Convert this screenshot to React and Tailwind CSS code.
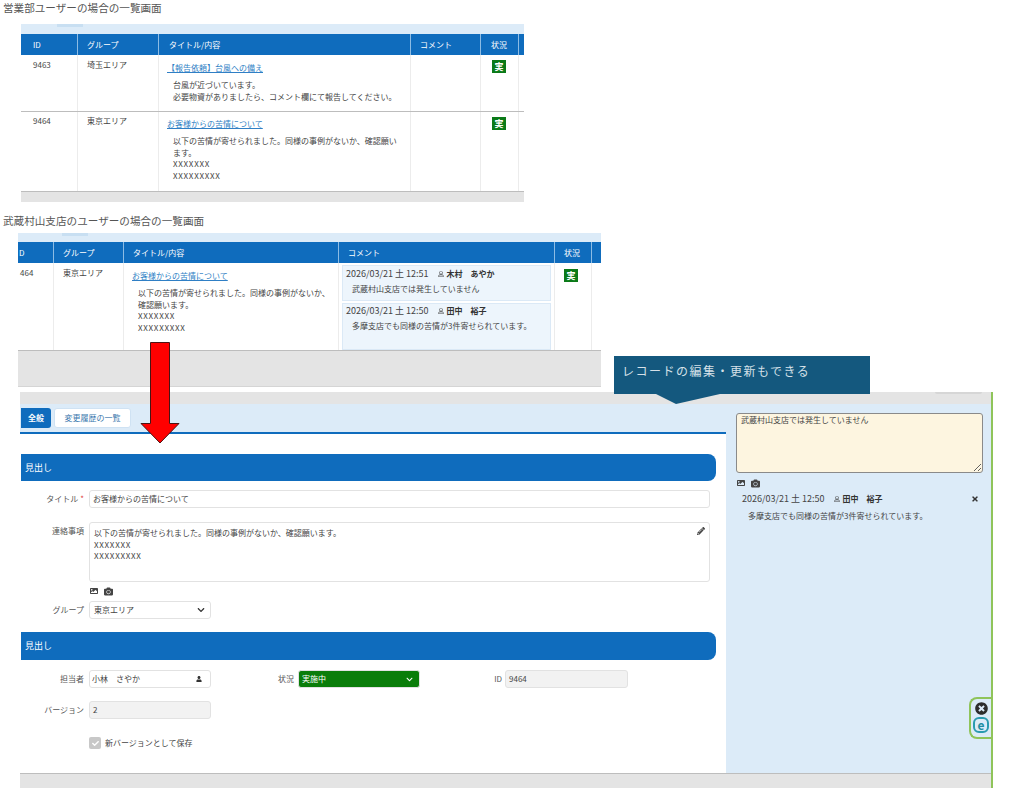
import { FaCamera, FaCheck, FaChevronDown, FaImage, FaPencilAlt, FaRegUser, FaTimes, FaTimesCircle, FaUser } from 'react-icons/fa'

const complaint = '以下の苦情が寄せられました。同様の事例がないか、確認願います。'

function ComplaintBody() {
  return (
    <>
      {complaint}
      <span className="block tracking-[0.7px]">XXXXXXX</span>
      <span className="block tracking-[0.7px]">XXXXXXXXX</span>
    </>
  )
}

function Badge() {
  return <span className="flex h-[13px] w-[14px] items-center justify-center bg-[#0b7a18] text-[9px] leading-none font-bold text-white">実</span>
}

function HeadCell({ children, className = 'pl-[9px]' }) {
  return <div className={`flex items-center border-r border-[#8dbce4] ${className}`}>{children}</div>
}

function Cell({ children, className = '' }) {
  return <div className={`border-r border-[#ececec] ${className}`}>{children}</div>
}

function TitleCell({ title, children, width, pad }) {
  return (
    <Cell className={pad}>
      <a className="block leading-[12px] text-[#2f7fc5] underline">{title}</a>
      <p className={`mt-[5px] ml-[6px] leading-[11.7px] ${width}`}>{children}</p>
    </Cell>
  )
}

function SalesTable() {
  const cols = 'grid grid-cols-[57px_81px_252px_70px_38px_5px]'
  return (
    <div className="ml-[21px] flex h-[178px] w-[503px] flex-col bg-white text-[8px] text-[#444]">
      <div className="h-[10px] bg-[#dcebf8] pl-[36px]"><div className="h-[3px] w-[26px] bg-[#c8dff2]" /></div>
      <div className={`${cols} h-[21px] bg-[#0f6cbd] text-white`}>
        <HeadCell className="pl-[12px]">ID</HeadCell>
        <HeadCell>グループ</HeadCell>
        <HeadCell className="pl-[10px]">タイトル/内容</HeadCell>
        <HeadCell>コメント</HeadCell>
        <HeadCell className="pl-[10px]">状況</HeadCell>
        <div />
      </div>
      <div className={`${cols} h-[57px] border-b border-[#bdbdbd]`}>
        <Cell className="pt-[4px] pl-[12px] leading-[12px]">9463</Cell>
        <Cell className="pt-[4px] pl-[9px] leading-[12px]">埼玉エリア</Cell>
        <TitleCell title="【報告依頼】台風への備え" width="w-[230px]" pad="pt-[7px] pl-[8px]">台風が近づいています。<br />必要物資がありましたら、コメント欄にて報告してください。</TitleCell>
        <Cell />
        <Cell className="pt-[5px] pl-[11px]"><Badge /></Cell>
        <div />
      </div>
      <div className={`${cols} h-[79px]`}>
        <Cell className="pt-[3px] pl-[12px] leading-[12px]">9464</Cell>
        <Cell className="pt-[3px] pl-[9px] leading-[12px]">東京エリア</Cell>
        <TitleCell title="お客様からの苦情について" width="w-[228px]" pad="pt-[6px] pl-[8px]"><ComplaintBody /></TitleCell>
        <Cell />
        <Cell className="pt-[5px] pl-[11px]"><Badge /></Cell>
        <div />
      </div>
      <div className="flex-1 border-t border-[#bdbdbd] bg-[#e4e4e4]" />
    </div>
  )
}

function CommentBox({ date, name, body, className = '' }) {
  return (
    <div className={`border border-[#dbe9f6] bg-[#edf5fc] pl-[3px] ${className}`}>
      <div className="flex items-center text-[9px] leading-[13px]">
        <span>{date}</span>
        <FaRegUser className="mr-[3px] ml-[9px] size-[6px]" />
        <b className="text-[8px] text-[#333]">{name}</b>
      </div>
      <p className="mt-[3px] ml-[6px] leading-[12px]">{body}</p>
    </div>
  )
}

function BranchTable() {
  const cols = 'grid grid-cols-[36px_70px_215px_216px_37px_9px]'
  return (
    <div className="mt-[4px] ml-[18px] flex h-[154px] w-[583px] flex-col text-[8px] text-[#444]">
      <div className="h-[9px] bg-[#dcebf8] pl-[44px]"><div className="h-[3px] w-[26px] bg-[#c8dff2]" /></div>
      <div className={`${cols} h-[21px] bg-[#0f6cbd] text-white`}>
        <HeadCell className="pl-[1px]">D</HeadCell>
        <HeadCell>グループ</HeadCell>
        <HeadCell>タイトル/内容</HeadCell>
        <HeadCell>コメント</HeadCell>
        <HeadCell>状況</HeadCell>
        <div />
      </div>
      <div className={`${cols} h-[88px] border-b border-[#bdbdbd]`}>
        <Cell className="pt-[4px] pl-[2px] leading-[12px]">464</Cell>
        <Cell className="pt-[4px] pl-[9px] leading-[12px]">東京エリア</Cell>
        <TitleCell title="お客様からの苦情について" width="w-[196px]" pad="pt-[7px] pl-[8px]"><ComplaintBody /></TitleCell>
        <Cell className="px-[3px] pt-[2px]">
          <CommentBox date="2026/03/21 土 12:51" name="木村　あやか" body="武蔵村山支店では発生していません" className="h-[36px] pt-[1px]" />
          <CommentBox date="2026/03/21 土 12:50" name="田中　裕子" body="多摩支店でも同様の苦情が3件寄せられています。" className="mt-[2px] h-[47px]" />
        </Cell>
        <Cell className="pt-[6px] pl-[9px]"><Badge /></Cell>
        <div />
      </div>
      <div className="flex-1 border-b border-[#d5d5d5] bg-[#e4e4e4]" />
    </div>
  )
}

function SectionBar() {
  return <div className="mr-[10px] ml-[1px] flex h-full items-center rounded-r-lg bg-[#0f6cbd] pl-[4px] text-[9px] text-white">見出し</div>
}

function Label({ children, className = 'w-[64px]' }) {
  return <span className={`shrink-0 text-right text-[8px] leading-[18px] text-[#555] ${className}`}>{children}</span>
}

function Input({ children, className = 'w-[122px] bg-white' }) {
  return <div className={`flex h-[18px] items-center justify-between rounded-[3px] border border-[#e2e2e2] px-[3px] text-[8px] text-[#444] ${className}`}>{children}</div>
}

function AttachIcons({ className = '' }) {
  return (
    <div className={`flex items-center gap-[6px] text-[#444] ${className}`}>
      <FaImage className="size-[8px]" />
      <FaCamera className="size-[9px]" />
    </div>
  )
}

function EditForm() {
  return (
    <div className="mt-[5px] ml-[20px] flex h-[396px] w-[973px] flex-col border-r-2 border-[#8fc45a]">
      <div className="flex h-[12px] justify-end bg-[#e4e4e4] pr-[9px]"><div className="h-[2px] w-[47px] rounded-b bg-[#d6d6d6]" /></div>
      <div className="flex h-[369px]">
        <div className="w-[706px]">
          <div className="flex h-[30px] gap-[3px] border-b-2 border-[#0f6cbd] bg-[#dcebf8] pt-[4px] pl-[1px] text-[8px]">
            <div className="flex h-[20px] w-[30px] items-center justify-center rounded-r-[3px] bg-[#0f6cbd] font-bold text-white">全般</div>
            <div className="flex h-[20px] w-[77px] items-center justify-center rounded-[3px] border border-[#cfe2f3] bg-white text-[#3b79ae]">変更履歴の一覧</div>
          </div>
          <div className="mt-[20px] h-[27px]"><SectionBar /></div>
          <div className="mt-[9px] flex gap-[5px]">
            <Label>タイトル<span className="ml-[2px] text-[#e0403a]">*</span></Label>
            <Input className="w-[621px] bg-white">お客様からの苦情について</Input>
          </div>
          <div className="mt-[14px] flex gap-[5px]">
            <Label>連絡事項</Label>
            <div className="relative h-[60px] w-[621px] rounded-[3px] border border-[#e2e2e2] px-[4px] pt-[4px] text-[8px] leading-[11.7px] text-[#444]">
              <ComplaintBody />
              <FaPencilAlt className="absolute top-[4px] right-[4px] size-[8px] text-[#444]" />
            </div>
          </div>
          <AttachIcons className="mt-[4px] ml-[70px] h-[10px]" />
          <div className="mt-[5px] flex gap-[5px]">
            <Label>グループ</Label>
            <Input className="w-[122px] bg-white pl-[4px]">東京エリア<FaChevronDown className="mr-[2px] size-[8px] text-[#333]" /></Input>
          </div>
          <div className="mt-[13px] h-[28px]"><SectionBar /></div>
          <div className="mt-[10px] flex">
            <Label>担当者</Label>
            <Input className="ml-[5px] w-[122px] bg-white pl-[2px]">小林　さやか<FaUser className="mr-[5px] size-[6px] text-[#333]" /></Input>
            <Label className="w-[83px]">状況</Label>
            <Input className="ml-[4px] w-[122px] border-[#0a7d0a] bg-[#0a7d0a] text-white">実施中<FaChevronDown className="mr-[3px] size-[7px]" /></Input>
            <Label className="w-[82px]">ID</Label>
            <Input className="ml-[3px] w-[123px] bg-[#f2f2f2]">9464</Input>
          </div>
          <div className="mt-[13px] flex gap-[5px]">
            <Label>バージョン</Label>
            <Input className="w-[122px] bg-[#f2f2f2]">2</Input>
          </div>
          <div className="mt-[18px] ml-[69px] flex items-center gap-[4px] text-[8px] text-[#444]">
            <span className="flex size-[12px] items-center justify-center rounded-[2px] bg-[#c8c8c8] text-white"><FaCheck className="size-[7px]" /></span>
            新バージョンとして保存
          </div>
        </div>
        <div className="relative flex-1 bg-[#dcebf8] pt-[9px] pl-[10px] text-[8px] text-[#444]">
          <textarea readOnly defaultValue="武蔵村山支店では発生していません" className="block h-[60px] w-[247px] rounded-[3px] border border-[#8a8a8a] bg-[#fdf5e0] px-[4px] py-0 text-[8px] leading-[12px] text-[#444] outline-none" />
          <AttachIcons className="mt-[6px] ml-[1px] h-[8px]" />
          <div className="mt-[6px] ml-[6px] flex w-[237px] items-center">
            <span className="text-[9px] leading-[12px]">2026/03/21 土 12:50</span>
            <FaRegUser className="mr-[3px] ml-[9px] size-[6px]" />
            <b className="text-[8px] text-[#333]">田中　裕子</b>
            <FaTimes className="ml-auto size-[8px] text-[#333]" />
          </div>
          <p className="mt-[5px] ml-[12px] leading-[12px]">多摩支店でも同様の苦情が3件寄せられています。</p>
          <div className="absolute top-[293px] right-0 flex h-[42px] w-[22px] flex-col items-center gap-[2px] rounded-l-lg border-2 border-r-0 border-[#8fc45a] pt-[3px]">
            <FaTimesCircle className="size-[13px] text-[#2d2d2d]" />
            <span className="flex size-[16px] items-center justify-center rounded-[6px] border-2 border-[#2a9bb0] text-[12px] leading-none font-bold text-[#1f8ea3]">e</span>
          </div>
        </div>
      </div>
      <div className="h-[15px] border-t border-[#bdbdbd] bg-[#e4e4e4]" />
    </div>
  )
}

export default function App() {
  return (
    <div className="relative h-[798px] w-[1024px] overflow-hidden bg-white font-['Noto_Sans_CJK_JP',sans-serif]">
      <p className="mb-[8px] h-[16px] pl-[3px] text-[10.6px] leading-[16px] text-[#555]">営業部ユーザーの場合の一覧画面</p>
      <SalesTable />
      <p className="mt-[11px] h-[16px] pl-[3px] text-[10.6px] leading-[16px] text-[#555]">武蔵村山支店のユーザーの場合の一覧画面</p>
      <BranchTable />
      <EditForm />

      <svg className="absolute top-[341px] left-[139px]" width="43" height="104" viewBox="0 0 43 104">
        <path d="M11.5 1.5h19v81h9.5l-19 19.5-19-19.5h9.5z" fill="#f00" stroke="#4a1414" strokeWidth="1" />
      </svg>

      <div className="absolute top-[356px] left-[614px] flex h-[38px] w-[256px] items-start bg-[#14587e] pt-[6px] pl-[8px] text-[12px] tracking-[1.5px] text-[#d5e0e8]">レコードの編集・更新もできる</div>
      <svg className="absolute top-[394px] left-[656px]" width="66" height="11" viewBox="0 0 66 11">
        <path d="M0 0L20 10L64 0z" fill="#14587e" />
      </svg>
    </div>
  )
}
